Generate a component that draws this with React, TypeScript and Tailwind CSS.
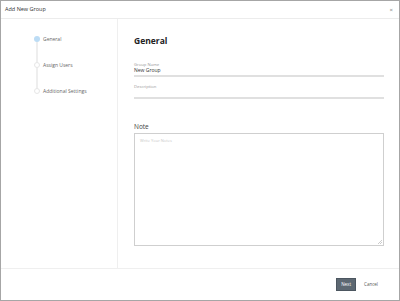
import React from "react";

export default function App() {
  const steps = [
    { label: "General", active: true },
    { label: "Assign Users", active: false },
    { label: "Additional Settings", active: false },
  ];
  return (
    <div
      className="w-[400px] h-[301px] border border-[#a6a6a6] bg-white flex flex-col text-[#333]"
      style={{ fontFamily: '"Open Sans", "Noto Sans", sans-serif' }}
    >
      <div className="h-[18px] shrink-0 border-b border-[#ececec] flex items-center justify-between pl-[4px] pr-[6px]">
        <span className="text-[5.5px] leading-none text-[#333]">Add New Group</span>
        <span className="text-[6px] leading-none text-[#777]">×</span>
      </div>
      <div className="flex-1 flex min-h-0">
        <div className="w-[117px] shrink-0 border-r border-[#efefef] relative">
          <div className="absolute left-[35px] top-[22px] w-[2px] h-[50px] bg-[#eeeeee]" />
          <div className="flex flex-col pt-[17px] pl-[33px] gap-[20px]">
            {steps.map((s) => (
              <div key={s.label} className="flex items-center h-[6px] relative">
                <span
                  className={
                    "w-[6px] h-[6px] rounded-full shrink-0 " +
                    (s.active ? "bg-[#bcdcf5]" : "bg-white border border-[#e6e6e6]")
                  }
                />
                <span className="ml-[3px] text-[5px] leading-none text-[#666]">{s.label}</span>
              </div>
            ))}
          </div>
        </div>
        <div className="flex-1 pl-[16px] pr-[15px] pt-[16px]">
          <div className="text-[8.5px] font-bold leading-[12px] text-[#222]">General</div>
          <div className="mt-[15px]">
            <div className="text-[4.2px] leading-[5px] text-[#999]">Group Name</div>
            <div className="text-[5px] leading-[7px] text-[#333]">New Group</div>
            <div className="h-[2px] bg-[#e0e0e0] mt-[1px]" />
          </div>
          <div className="mt-[7px]">
            <div className="text-[4.2px] leading-[5px] text-[#999]">Description</div>
            <div className="h-[7px]" />
            <div className="h-[2px] bg-[#e0e0e0] mt-[1px]" />
          </div>
          <div className="mt-[23px] text-[6.5px] leading-[9px] text-[#444]">Note</div>
          <div className="mt-[2px] h-[113px] border border-[#cfcfcf] relative">
            <div className="pl-[5px] pt-[5px] text-[4px] leading-none text-[#c8c8c8]">Write Your Notes</div>
            <svg className="absolute right-[1px] bottom-[1px]" width="4" height="4" viewBox="0 0 4 4">
              <path d="M4 0 L0 4 M4 2 L2 4" stroke="#aaa" strokeWidth="0.6" />
            </svg>
          </div>
        </div>
      </div>
      <div className="h-[32px] shrink-0 border-t border-[#efefef] flex items-center justify-end pr-[21px]">
        <button className="w-[20px] h-[13px] bg-[#5d6872] border border-[#4c5660] text-white text-[4.5px] leading-none flex items-center justify-center">
          Next
        </button>
        <span className="ml-[8px] text-[4.5px] leading-none text-[#555]">Cancel</span>
      </div>
    </div>
  );
}
